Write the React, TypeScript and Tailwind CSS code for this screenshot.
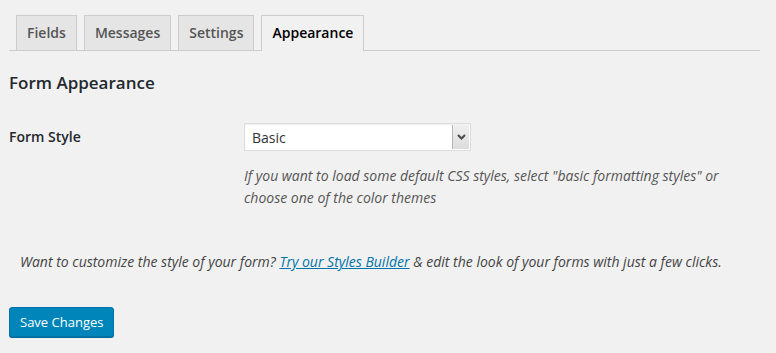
const tabs = ["Fields", "Messages", "Settings", "Appearance"];

function SelectArrow() {
  return (
    <span className="flex h-full w-[17px] items-center justify-center border-l border-[#b5b5b5] bg-gradient-to-b from-[#f0f0f0] to-[#dcdcdc]">
      <svg width="9" height="6" viewBox="0 0 9 6" fill="none">
        <path d="M1 1l3.5 3.5L8 1" stroke="#4a4a4a" strokeWidth="2" />
      </svg>
    </span>
  );
}

export default function App() {
  return (
    <div
      className="min-h-[353px] w-[776px] bg-[#f1f1f1] pl-[9px] pr-[16px] text-[14px] text-[#444]"
      style={{ fontFamily: '"Open Sans", "Noto Sans", sans-serif' }}
    >
      <div className="flex gap-[7px] border-b border-[#ccc] pl-[7px] pt-[15px]">
        {tabs.map((tab) => {
          const active = tab === "Appearance";
          return (
            <div
              key={tab}
              className={
                active
                  ? "-mb-px border border-b-0 border-[#ccc] bg-[#f1f1f1] px-[10px] pb-[6px] pt-[5px] text-[14px] font-semibold leading-6 text-black"
                  : "border border-b-0 border-[#ccc] bg-[#e5e5e5] px-[10px] py-[5px] text-[14px] font-semibold leading-6 text-[#555]"
              }
            >
              {tab}
            </div>
          );
        })}
      </div>

      <h3 className="mt-[20px] text-[17px] font-semibold leading-6 text-[#23282d]">Form Appearance</h3>

      <div className="mt-[28px] flex">
        <div className="w-[235px] pt-[4px] font-semibold leading-5 text-[#23282d]">Form Style</div>
        <div className="flex-1">
          <div className="flex h-[28px] w-[227px] items-center border border-[#ddd] bg-white pl-[7px] text-[14px] text-[#333] shadow-[inset_0_1px_2px_rgba(0,0,0,0.07)]">
            <span className="flex-1">Basic</span>
            <span className="mr-px h-[24px]">
              <SelectArrow />
            </span>
          </div>
          <p className="mt-[14px] pr-[40px] italic leading-[22px] text-[#555]">
            If you want to load some default CSS styles, select "basic formatting styles" or choose one of the color themes
          </p>
        </div>
      </div>

      <p className="mt-[42px] pl-[11px] italic leading-[22px] text-[#444]">
        Want to customize the style of your form?{" "}
        <a className="text-[#0073aa] underline" href="#">
          Try our Styles Builder
        </a>{" "}
        &amp; edit the look of your forms with just a few clicks.
      </p>

      <button className="mt-[34px] h-[30px] rounded-[3px] border border-[#0073aa] bg-[#0085ba] px-[10px] pb-px text-[13px] leading-[28px] text-white shadow-[0_1px_0_#006799]">
        Save Changes
      </button>
    </div>
  );
}
